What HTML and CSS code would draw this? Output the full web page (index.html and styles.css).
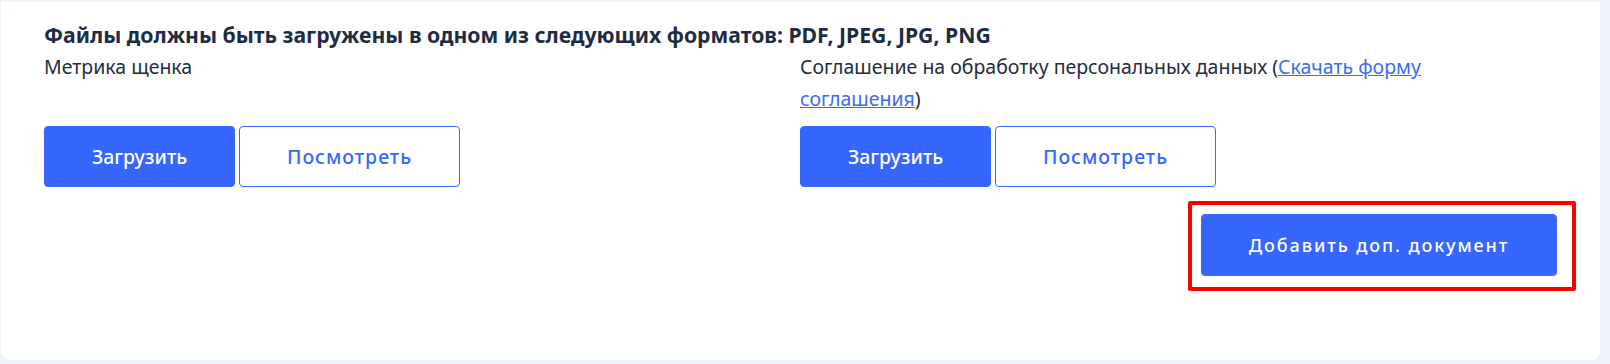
FILE: index.html
```html
<!DOCTYPE html>
<html lang="ru">
<head>
<meta charset="utf-8">
<title>Документы</title>
<link rel="stylesheet" href="styles.css">
</head>
<body>
<div class="card">
  <h3 class="title">Файлы должны быть загружены в одном из следующих форматов: PDF, JPEG, JPG, PNG</h3>
  <div class="docs">
    <div class="doc">
      <p class="label">Метрика щенка</p>
      <div class="actions">
        <button class="btn btn-primary btn-upload">Загрузить</button>
        <button class="btn btn-outline btn-view">Посмотреть</button>
      </div>
    </div>
    <div class="doc">
      <p class="label label-wide">Соглашение на обработку персональных данных (<a href="#" class="link">Скачать форму соглашения</a>)</p>
      <div class="actions">
        <button class="btn btn-primary btn-upload">Загрузить</button>
        <button class="btn btn-outline btn-view">Посмотреть</button>
      </div>
    </div>
  </div>
  <div class="add-row">
    <div class="highlight-wrap">
      <button class="btn btn-primary btn-add">Добавить доп. документ</button>
      <span class="highlight"></span>
    </div>
  </div>
</div>
</body>
</html>
```

FILE: styles.css
```css
html, body {
  margin: 0;
  padding: 0;
}
body {
  background: #eef2fd;
  font-family: "Noto Sans", "Open Sans", sans-serif;
  color: #1f2d45;
  width: 1610px;
  height: 364px;
  overflow: hidden;
}
.card {
  box-sizing: border-box;
  margin: 2px 10px 0 1px;
  height: 358px;
  background: #ffffff;
  border-radius: 0 0 9px 9px;
  padding: 19px 43px 0 43px;
}
.title {
  margin: 0 0 2px 0;
  font-size: 21.2px;
  font-weight: 700;
  line-height: 28px;
  color: #1e2c42;
}
.docs {
  display: grid;
  grid-template-columns: 756px 1fr;
}
.doc {
  display: flex;
  flex-direction: column;
}
.label {
  margin: 0;
  font-size: 19.5px;
  line-height: 32px;
  color: #1f2d3d;
  flex: 1;
}
.label-wide {
  max-width: 660px;
}
.link {
  color: #3b6bf5;
  text-decoration: underline;
}
.actions {
  display: flex;
  gap: 4px;
  margin-top: 11px;
}
.btn {
  box-sizing: border-box;
  height: 61px;
  border-radius: 4px;
  font-family: inherit;
  font-size: 19.5px;
  font-weight: 500;
  cursor: pointer;
  padding: 0;
}
.btn-primary {
  background: #3766ff;
  border: 1px solid #3766ff;
  color: #ffffff;
}
.btn-upload {
  width: 191px;
}
.btn-outline {
  background: #ffffff;
  border: 1px solid #3766ff;
  color: #3766ff;
  letter-spacing: 1px;
}
.btn-view { width: 221px; }
.add-row {
  display: flex;
  justify-content: flex-end;
  margin-top: 27px;
}
.highlight-wrap {
  position: relative;
}
.btn-add {
  width: 356px;
  height: 62px;
  font-size: 18px;
  letter-spacing: 1.9px;
  display: block;
}
.highlight {
  position: absolute;
  top: -13px;
  left: -13px;
  right: -19px;
  bottom: -15px;
  border: 4px solid #ff0000;
  border-radius: 2px;
  pointer-events: none;
}
```
